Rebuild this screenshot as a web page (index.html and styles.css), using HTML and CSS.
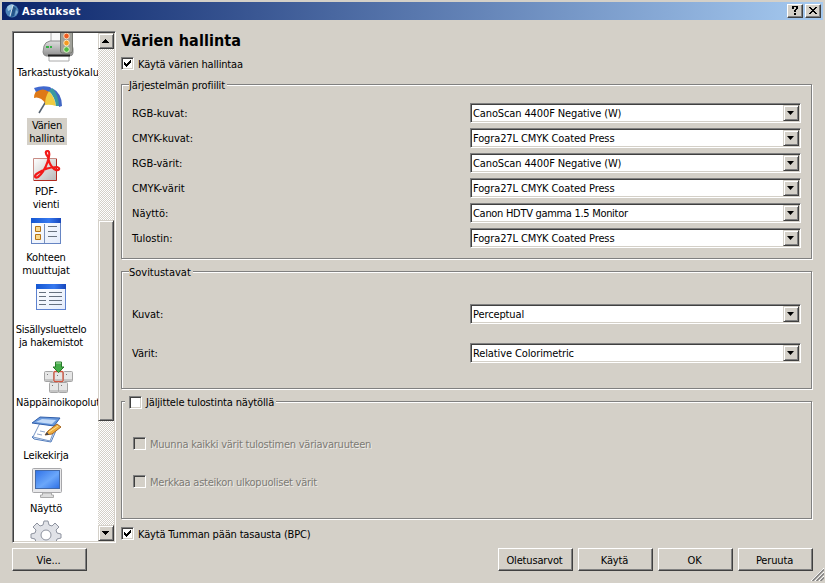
FILE: index.html
```
<!DOCTYPE html>
<html lang="fi">
<head>
<meta charset="utf-8">
<title>Asetukset</title>
<link rel="stylesheet" href="styles.css">
</head>
<body>
<div class="window">
  <header class="titlebar">
    <svg class="app-icon" width="16" height="16" viewBox="0 0 16 16"><circle cx="8" cy="8" r="6.500" fill="#4b83b8"/><path d="M3 4Q6 0 10 2Q9 6 4 8Z" fill="#9cc6e4"/><path d="M9 3L12 5L10 13L7 14L8 8Z" fill="#245487"/><path d="M9 2L6 13" stroke="#d2dfe8" stroke-width="1"/><path d="M12 7l2 2-3 4z" fill="#82add0"/></svg>
    <h1>Asetukset</h1>
    <span class="caption-btn"><svg width="14" height="12" viewBox="0 0 14 12" shape-rendering="crispEdges"><path d="M4 1h6v1h-6zM4 2h2v2h-2zM8 2h2v2h-2zM7 4h2v1h-2zM6 5h2v2h-2zM6 8h2v2h-2z"/></svg></span>
    <span class="caption-btn"><svg width="14" height="12" viewBox="0 0 14 12" shape-rendering="crispEdges"><path d="M3 2h2v1h1v1h2v-1h1v-1h2v1h-1v1h-1v1h-1v1h1v1h1v1h1v1h-2v-1h-1v-1h-2v1h-1v1h-2v-1h1v-1h1v-1h1v-1h-1v-1h-1v-1h-1z"/></svg></span>
  </header>

  <div class="body">
    <nav class="list">
      <ul class="items">
        <li class="item wide tool">
          <svg width="32" height="32" viewBox="0 0 32 32"><defs><linearGradient id="metal" y2="1" x2="0"><stop stop-color="#dedede"/><stop offset="1" stop-color="#8f8f8f"/></linearGradient></defs><path d="M9 0h10v14H9z" fill="#f8f8f8" stroke="#aaa"/><path d="M2 15Q3 11 8 10H28Q31 14 31 18V22Q31 25 27 25H4Q1 24 1 21Z" fill="url(#metal)" stroke="#8a8a8a"/><path d="M4 16h6" stroke="#35ae45" stroke-width="2" stroke-dasharray="3 1"/><path d="M7 25h20v5H7z" fill="#fff" stroke="#aaa"/><path d="M6 24.500h22" stroke="#222" stroke-width="2"/><rect x="18.500" y="-2" width="12" height="24" rx="2" fill="#a0a19a" stroke="#74766f"/><circle cx="24.500" cy="5" r="2.800" fill="#ef5b20" stroke="#fbd9b3"/><circle cx="24.500" cy="12" r="2.800" fill="#f69a20" stroke="#fbe4b8"/><circle cx="24.500" cy="18.500" r="2.800" fill="#53bc46" stroke="#dff1c9"/></svg>
          <span class="label">Tarkastustyökalu</span>
        </li>
        <li class="item selected">
          <svg width="32" height="32" viewBox="0 0 32 32"><path d="M17 14L8 29" fill="none" stroke="#53606e" stroke-width="1.500"/><path d="M3 14Q3 7 9 5Q14 3 19 7Q16 12 15 20Q9 12 3 14Z" fill="#de7916"/><path d="M3 4Q11 1 19 3L21 5L18 8Q12 3 5 8Z" fill="#4169cf"/><path d="M18 7Q24 14 25 22Q19 20 14 21Q14 13 18 7Z" fill="#f0cc42"/><path d="M18 7L21 4Q28 9 29 22L25 22Q24 13 18 7Z" fill="#3a9a9e"/><path d="M21 4Q31 9 31 22L28 23Q28 11 21 4Z" fill="#4167c4"/></svg>
          <span class="label">Värien<br>hallinta</span>
        </li>
        <li class="item">
          <svg width="32" height="32" viewBox="0 0 32 32"><defs><linearGradient id="pdf" x2="1" y2="1"><stop stop-color="#fff"/><stop offset="1" stop-color="#b8b8b8"/></linearGradient></defs><path d="M3.500 8.500h23v22h-23z" fill="url(#pdf)" stroke="#c88c85"/><path d="M26.500 9v21.500H4" fill="none" stroke="#b12a20"/><path d="M18 7C15 3 15 1 18 1C22 2 16 21 8 27C4 29 4 25 8 23C14 19 22 17 27 17C31 18 29 22 24 19C19 15 19 11 18 7Z" fill="none" stroke="#f31a19" stroke-width="2.200"/></svg>
          <span class="label">PDF-<br>vienti</span>
        </li>
        <li class="item">
          <svg width="32" height="32" viewBox="0 0 32 32"><defs><linearGradient id="bar"><stop stop-color="#1557d2"/><stop offset=".6" stop-color="#3779ef"/><stop offset="1" stop-color="#1747bc"/></linearGradient><linearGradient id="sheet" x2="1" y2="1"><stop stop-color="#fff"/><stop offset="1" stop-color="#e4ecfb"/></linearGradient></defs><rect x="1.500" y="2.500" width="29" height="25" fill="url(#sheet)" stroke="#6685c3"/><path d="M1 2h30v5H1z" fill="url(#bar)"/><path d="M14.500 8v19" stroke="#7990ba"/><path d="M5.500 10.500h5v5h-5zM5.500 18.500h5v5h-5z" fill="#f9d98d" stroke="#b67518"/><path d="M18 10.500h9M18 15.500h9M18 20.500h9" stroke="#69727e" stroke-width="1.200"/></svg>
          <span class="label">Kohteen<br>muuttujat</span>
        </li>
        <li class="item tall">
          <svg width="32" height="32" viewBox="0 0 32 32"><rect x="1.500" y="2.500" width="29" height="25" fill="url(#sheet)" stroke="#5d82cf"/><path d="M1 2h30v5H1z" fill="url(#bar)"/><path d="M4 10.500h7M4 14.500h7M4 18.500h7M4 22.500h7M14 10.500h13M14 14.500h13M14 18.500h13M14 22.500h13" stroke="#65707f"/></svg>
          <span class="label">Sisällysluettelo<br>ja hakemistot</span>
        </li>
        <li class="item wide">
          <svg width="32" height="32" viewBox="0 0 32 32"><g fill="#e6e6e6" stroke="#a5a5a5"><rect x="2.500" y="10.500" width="9" height="10" rx="1"/><rect x="21.500" y="10.500" width="9" height="10" rx="1"/><rect x="7.500" y="21.500" width="9" height="10" rx="1"/><rect x="16.500" y="21.500" width="9" height="10" rx="1"/><rect x="12" y="10.500" width="9" height="10" rx="1" stroke="#d25640" stroke-width="1.300"/></g><path d="M3 19h8M22 19h8M8 30h8M17 30h8M13 19h7" stroke="#bbb" stroke-width="1.500"/><path d="M5 13.500h1M15 14.500h1M24 13.500h1M10 24.500h1M19 24.500h1" stroke="#777"/><path d="M13.500 1h6v5h2.500l-5.500 5.500-5.500-5.500h2.500z" fill="#44ad48" stroke="#287a2b"/><path d="M14 2h5" stroke="#b1dfb0"/></svg>
          <span class="label">Näppäinoikopolut</span>
        </li>
        <li class="item">
          <svg width="32" height="32" viewBox="0 0 32 32"><path d="M22 11L28 12L21 28L4 25L2 23Z" fill="#e5effc" stroke="#527cbc"/><path d="M3 23L10 9L26 12L20 27Z" fill="#fff" stroke="#7796c6"/><path d="M2 9L10 3L30 4L24 12Z" fill="#6a9add" stroke="#315faa"/><path d="M6 8L12 5L26 6L22 10Z" fill="#c3daf7"/><path d="M7 20L12 21M10 17L15 18" stroke="#91a7ca"/><path d="M15 21l3-4 9-7 4 3-9 7z" fill="#f0ad3d" stroke="#a66521"/><path d="M19 18l9-6" stroke="#ffe392"/><path d="M15 21l2-3 2 3z" fill="#454954"/></svg>
          <span class="label">Leikekirja</span>
        </li>
        <li class="item">
          <svg width="32" height="32" viewBox="0 0 32 32"><defs><linearGradient id="screen" x2="1" y2="1"><stop stop-color="#3072e8"/><stop offset=".55" stop-color="#6ba7fa"/><stop offset="1" stop-color="#2d6fe6"/></linearGradient></defs><rect x="2.500" y="1.500" width="29" height="24" rx="1" fill="#e8e8ea" stroke="#a7a7aa"/><rect x="5.500" y="3.500" width="24" height="18" fill="url(#screen)" stroke="#4269a9"/><path d="M12.500 26h9v2h2v2.500h-13V28h2z" fill="#ddd" stroke="#aaa"/></svg>
          <span class="label">Näyttö</span>
        </li>
        <li class="item">
          <svg width="32" height="32" viewBox="0 0 32 32"><g fill="#e0e2e7" stroke="#8e939f"><path d="M13 5L14 1H18L19 5L22 6L25 3L29 7L26 10L27 13L31 14V18L27 19L26 22L29 25L25 29L22 26L19 27L18 31H14L13 27L10 26L7 29L3 25L6 22L5 19L1 18V14L5 13L6 10L3 7L7 3L10 6Z" stroke-linejoin="round"/><circle cx="16" cy="15" r="5" fill="#fff"/></g></svg>
        </li>
      </ul>
      <div class="scroll">
        <span class="scroll-btn"><svg width="7" height="4" viewBox="0 0 7 4" shape-rendering="crispEdges"><path d="M3 0h1v1h1v1h1v1h1v1H0V3h1V2h1V1h1z"/></svg></span>
        <span class="track before"></span>
        <span class="thumb"></span>
        <span class="track after"></span>
        <span class="scroll-btn"><svg width="7" height="4" viewBox="0 0 7 4" shape-rendering="crispEdges"><path d="M0 0h7v1H6v1H5v1H4v1H3V3H2V2H1V1H0z"/></svg></span>
      </div>
    </nav>

    <main class="panel">
      <h2>Värien hallinta</h2>
      <div class="option"><span class="box"><svg width="9" height="9" viewBox="0 0 9 9" shape-rendering="crispEdges"><path d="M1 3h1v1h1v1h1V4h1V3h1V2h1V1h1v3H7v1H6v1H5v1H4v1H3V7H2V6H1z"/></svg></span><span class="caption">Käytä värien hallintaa</span></div>

      <section class="group profiles">
        <h3 class="legend">Järjestelmän profiilit</h3>
        <div class="row"><span class="name">RGB-kuvat:</span><div class="combo"><span>CanoScan 4400F Negative (W)</span><i class="drop"></i></div></div>
        <div class="row"><span class="name">CMYK-kuvat:</span><div class="combo"><span>Fogra27L CMYK Coated Press</span><i class="drop"></i></div></div>
        <div class="row"><span class="name">RGB-värit:</span><div class="combo"><span>CanoScan 4400F Negative (W)</span><i class="drop"></i></div></div>
        <div class="row"><span class="name">CMYK-värit</span><div class="combo"><span>Fogra27L CMYK Coated Press</span><i class="drop"></i></div></div>
        <div class="row"><span class="name">Näyttö:</span><div class="combo"><span class="snug">Canon HDTV gamma 1.5 Monitor</span><i class="drop"></i></div></div>
        <div class="row"><span class="name">Tulostin:</span><div class="combo"><span>Fogra27L CMYK Coated Press</span><i class="drop"></i></div></div>
      </section>

      <section class="group intents">
        <h3 class="legend">Sovitustavat</h3>
        <div class="row"><span class="name">Kuvat:</span><div class="combo"><span>Perceptual</span><i class="drop"></i></div></div>
        <div class="row"><span class="name">Värit:</span><div class="combo"><span>Relative Colorimetric</span><i class="drop"></i></div></div>
      </section>

      <section class="group simulate">
        <h3 class="legend option"><span class="box"></span><span>Jäljittele tulostinta näytöllä</span></h3>
        <div class="option disabled"><span class="box"></span><span class="caption">Muunna kaikki värit tulostimen väriavaruuteen</span></div>
        <div class="option disabled"><span class="box"></span><span class="caption">Merkkaa asteikon ulkopuoliset värit</span></div>
      </section>

      <div class="option bpc"><span class="box"><svg width="9" height="9" viewBox="0 0 9 9" shape-rendering="crispEdges"><path d="M1 3h1v1h1v1h1V4h1V3h1V2h1V1h1v3H7v1H6v1H5v1H4v1H3V7H2V6H1z"/></svg></span><span class="caption">Käytä Tumman pään tasausta (BPC)</span></div>
    </main>
  </div>

  <footer class="actions">
    <button class="btn export">Vie...</button>
    <button class="btn">Oletusarvot</button>
    <button class="btn">Käytä</button>
    <button class="btn">OK</button>
    <button class="btn">Peruuta</button>
  </footer>
  <svg class="grip" width="13" height="13" viewBox="0 0 13 13"><path d="M0 13L13 0M4 13L13 4M8 13L13 8" stroke="#fff"/><path d="M1.500 13L13 1.500M5.500 13L13 5.500M9.500 13L13 9.500" stroke="#808080" stroke-width="1.500"/></svg>
</div>
</body>
</html>
```
FILE: styles.css
```
* { box-sizing: border-box; }

body {
  margin: 0;
  background: #d4d0c8;
  color: #000;
  font-family: "DejaVu Sans Condensed", "DejaVu Sans", sans-serif;
  font-stretch: condensed;
  font-size: 11px;
  line-height: 13px;
  letter-spacing: -0.16px;
  overflow: hidden;
}

h1, h2, h3, ul { margin: 0; padding: 0; font: inherit; }

.window { position: relative; width: 825px; height: 583px; padding: 2px; display: flex; flex-direction: column; }

.titlebar {
  height: 18px;
  padding: 0 2px;
  display: flex;
  align-items: center;
  background: linear-gradient(90deg, #0a246a, #a6caf0);
}
.titlebar h1 { flex: 1; margin-left: 2px; color: #fff; font-weight: bold; letter-spacing: 0.3px; }
.app-icon { display: block; }
.caption-btn {
  width: 16px; height: 14px; margin-left: 2px;
  background: #d4d0c8;
  border: 1px solid; border-color: #fff #404040 #404040 #fff;
  box-shadow: inset -1px -1px 0 #808080;
}
.caption-btn svg { display: block; }

.body { display: flex; gap: 5px; margin: 11px 10px 0; height: 512px; }

.list {
  width: 104px; height: 512px;
  display: flex;
  background: #fff;
  border: 1px solid; border-color: #808080 #fff #fff #808080;
  box-shadow: inset 1px 1px 0 #404040, inset -1px -1px 0 #d4d0c8;
  padding: 1px;
}
.items { width: 84px; height: 508px; overflow: hidden; list-style: none; }
.item { width: 64px; height: 66px; display: flex; flex-direction: column; align-items: center; text-align: center; white-space: nowrap; }
.item svg { flex: none; display: block; }
.item .label { margin-top: 3px; padding: 0 2px; }
.item.wide { width: 88px; height: 53px; }
.item.tool .label { letter-spacing: -0.05px; }
.item:first-child { margin-top: -2px; }
.item.selected { width: 66px; }
.item.selected .label { background: #d4d0c8; width: 40px; height: 27px; margin-top: 2px; padding-top: 1px; }
.item.tall { width: 74px; height: 79px; letter-spacing: -0.25px; }
.item.tall .label { margin-top: 9px; }
.item.tall ~ .item { height: 53px; }

.scroll { width: 16px; display: flex; flex-direction: column; }
.scroll-btn, .thumb {
  background: #d4d0c8;
  border: 1px solid; border-color: #d4d0c8 #404040 #404040 #d4d0c8;
  box-shadow: inset 1px 1px 0 #fff, inset -1px -1px 0 #808080;
}
.scroll-btn { height: 16px; padding-right: 1px; display: flex; align-items: center; justify-content: center; }
.track { background: repeating-conic-gradient(#fff 0 25%, #d4d0c8 0 50%) 0 0 / 2px 2px; }
.track.before { height: 171px; }
.thumb { height: 201px; }
.track.after { flex: 1; }

.panel { width: 692px; display: flex; flex-direction: column; }
.panel h2 { height: 20px; font-size: 16px; line-height: 20px; font-weight: bold; letter-spacing: 0.1px; }

.option { display: flex; align-items: center; gap: 4px; height: 13px; }
.option .caption { padding-top: 2px; }
.panel > .option { margin-top: 6px; }
.box {
  width: 13px; height: 13px; flex: none;
  background: #fff;
  border: 1px solid; border-color: #808080 #fff #fff #808080;
  box-shadow: inset 1px 1px 0 #404040, inset -1px -1px 0 #d4d0c8;
}
.box svg { display: block; margin: 1px; }

.group {
  width: 691px;
  border: 1px solid #808080;
  box-shadow: inset 1px 1px 0 #fff, 1px 1px 0 #fff;
  padding: 0 10px;
}
.legend { width: max-content; height: 14px; line-height: 15px; margin: -7px 0 0 -3px; padding: 0 2px 0 0; background: #d4d0c8; }
.profiles { margin-top: 14px; height: 175px; }
.profiles .legend { margin-bottom: 9px; }
.row { height: 25px; padding-top: 2px; display: flex; align-items: flex-start; justify-content: space-between; }
.name { margin-top: 4px; letter-spacing: -0.02px; }
.combo {
  width: 331px; height: 20px;
  display: flex; align-items: flex-start; justify-content: space-between;
  padding: 1px 1px 1px 2px;
  background: #fff;
  border: 1px solid; border-color: #808080 #fff #fff #808080;
  box-shadow: inset 1px 1px 0 #404040, inset -1px -1px 0 #d4d0c8;
}
.combo span { margin-top: 2px; letter-spacing: -0.12px; }
.combo .snug { letter-spacing: -0.3px; }
.drop {
  width: 16px; height: 16px; padding-right: 1px;
  display: flex; align-items: center; justify-content: center;
  background: #d4d0c8;
  border: 1px solid; border-color: #d4d0c8 #404040 #404040 #d4d0c8;
  box-shadow: inset 1px 1px 0 #fff, inset -1px -1px 0 #808080;
}
.drop::before { content: ""; width: 7px; height: 4px; background: #000; clip-path: polygon(0 0, 100% 0, 50% 100%); }

.intents { margin-top: 12px; height: 118px; }
.intents .legend { margin-bottom: 15px; letter-spacing: -0.02px; }
.intents .row { height: 39px; padding-top: 10px; }

.simulate { margin-top: 12px; height: 118px; }
.simulate .legend { line-height: 13px; margin-left: -7px; padding-left: 4px; margin-bottom: 28px; }
.disabled { margin: 0 0 25px 1px; color: #7c7a74; letter-spacing: -0.24px; text-shadow: 1px 1px 0 rgba(255, 255, 255, 0.6); }
.disabled .box { background: #d4d0c8; }
.panel > .bpc { margin-top: 8px; }

.actions { display: flex; gap: 5px; margin: 5px 10px 0; }
.btn {
  width: 75px; height: 23px; padding: 2px 2px 0 0;
  font: inherit; letter-spacing: inherit; color: inherit;
  background: #d4d0c8;
  border: 1px solid; border-color: #fff #404040 #404040 #fff;
  box-shadow: inset -1px -1px 0 #808080;
}
.btn.export { margin-right: auto; }
.grip { position: absolute; right: 1px; bottom: 2px; }
```
